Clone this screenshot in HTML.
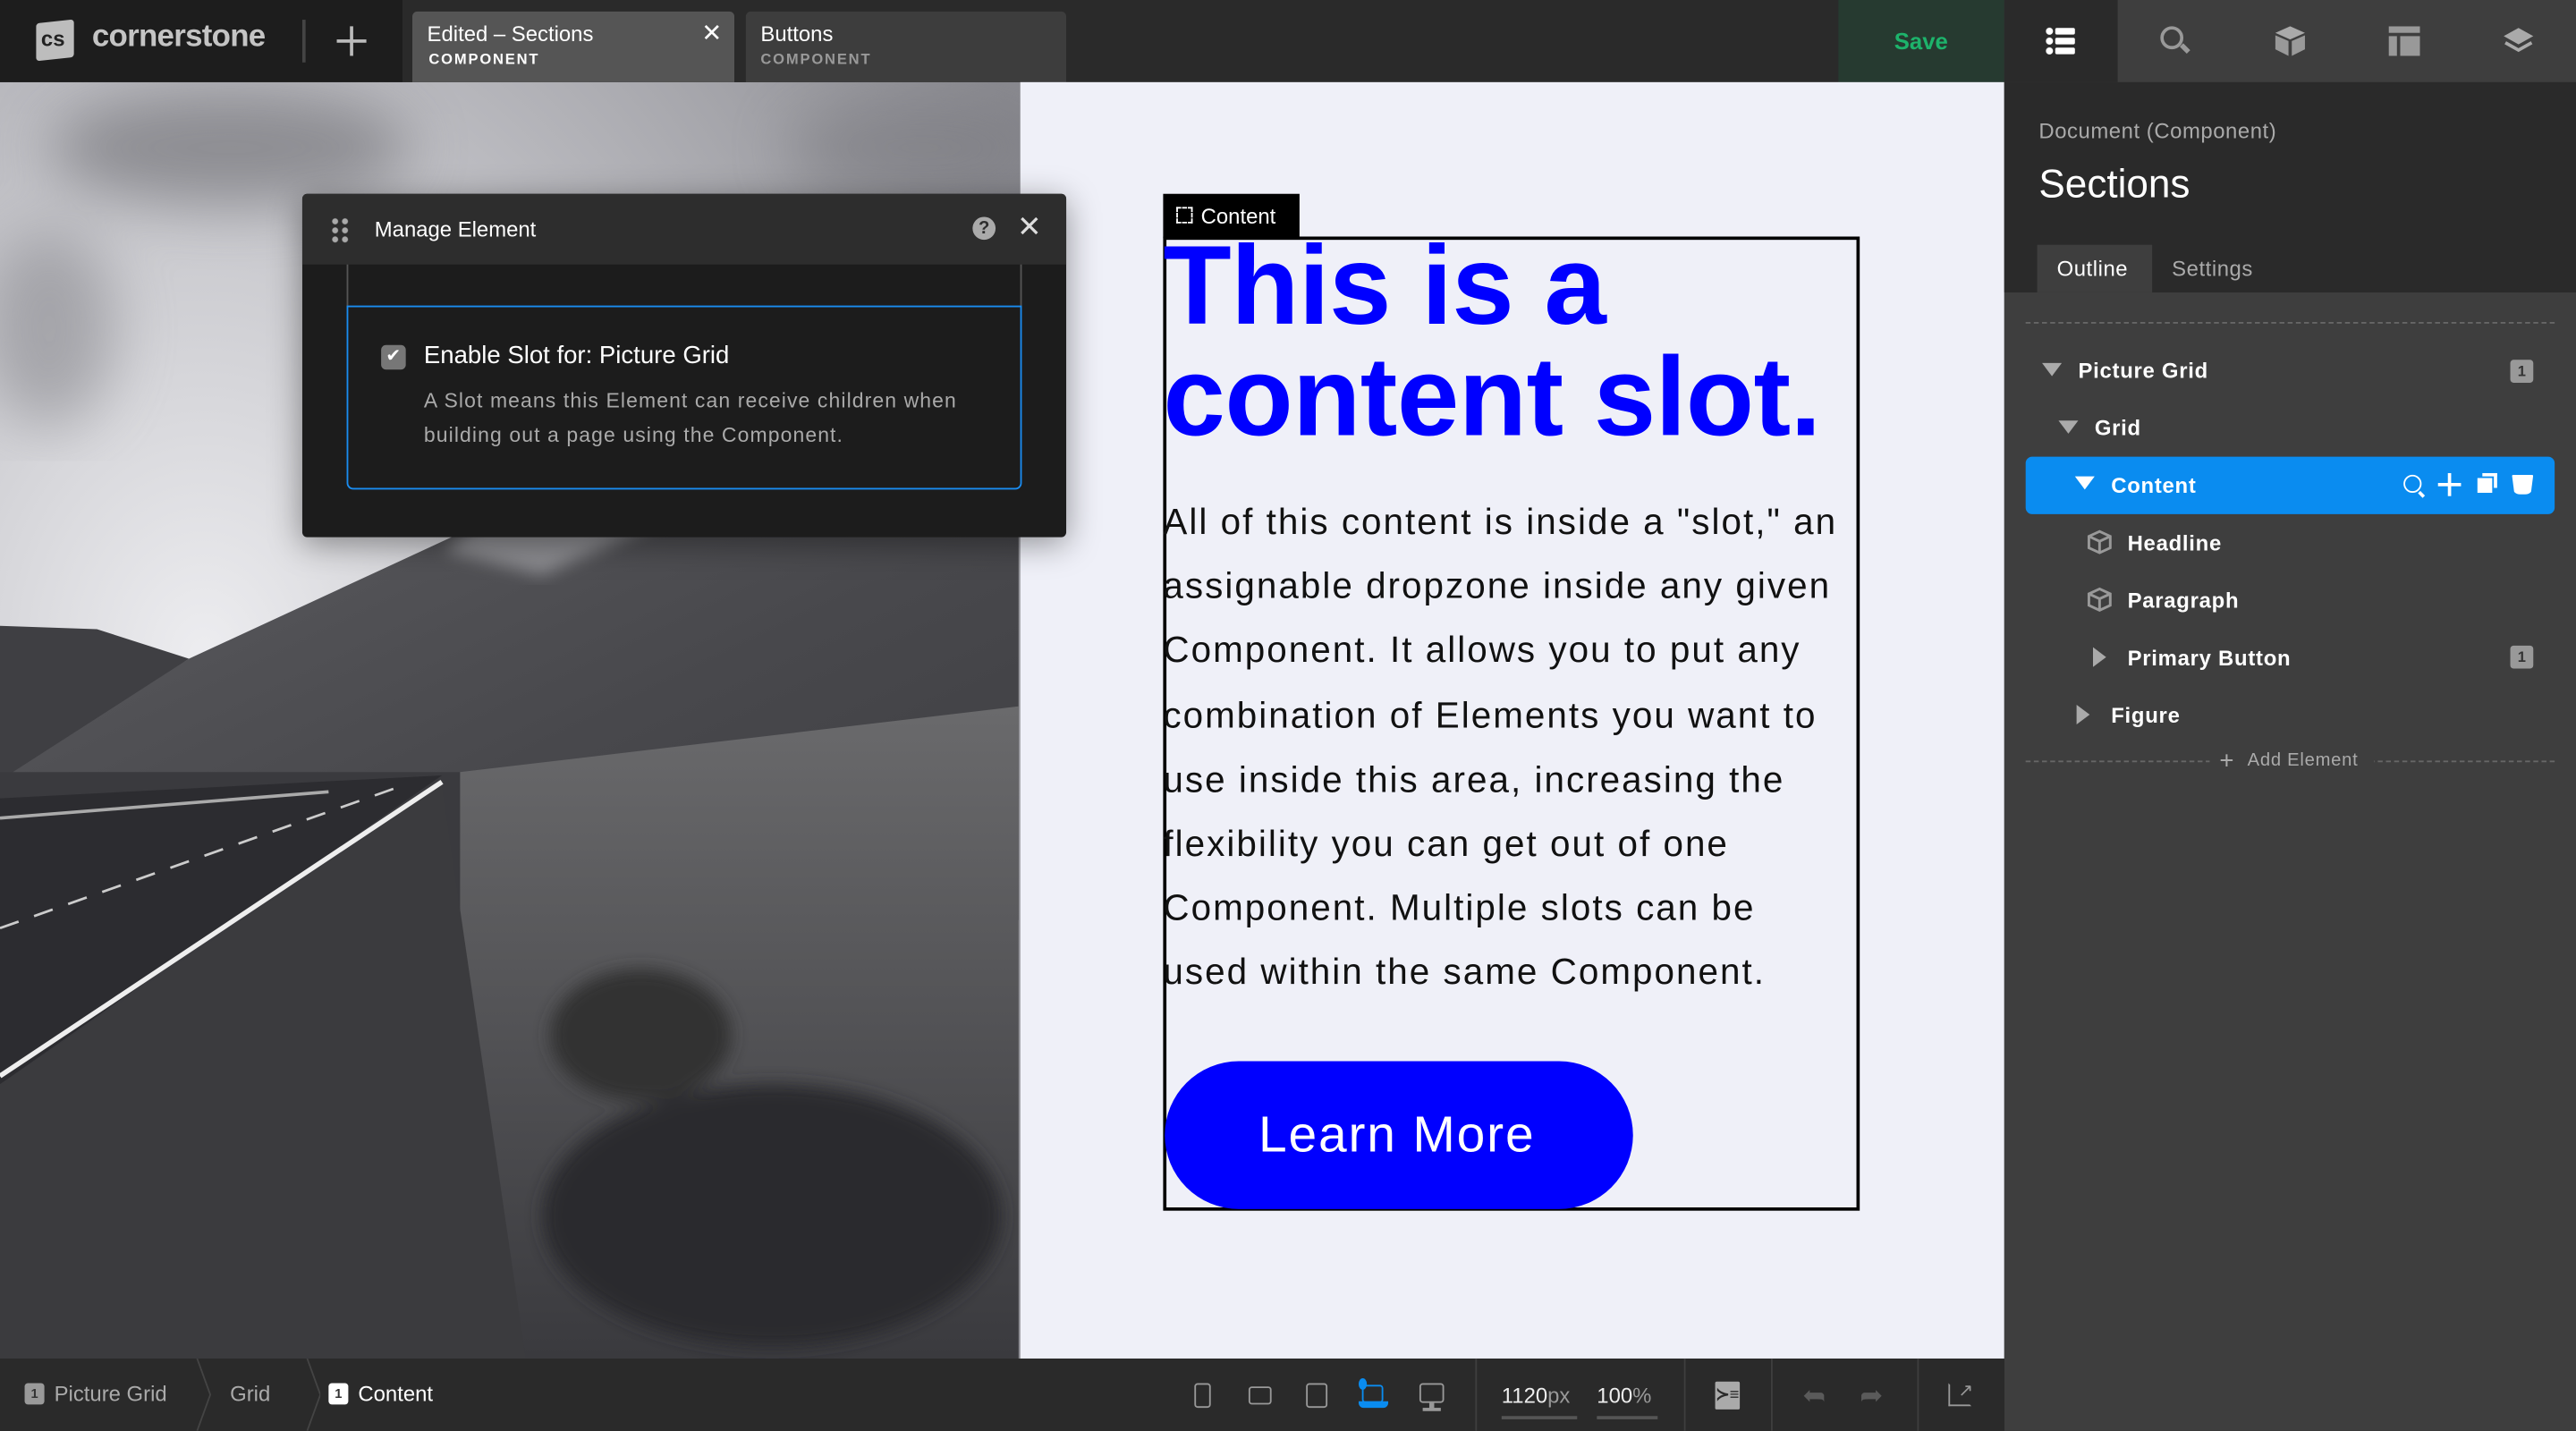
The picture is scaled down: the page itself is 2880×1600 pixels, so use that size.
<!DOCTYPE html>
<html><head><meta charset="utf-8">
<style>
*{box-sizing:border-box;margin:0;padding:0}
html,body{width:2880px;height:1600px;overflow:hidden;background:#2a2a2a}
#w{position:absolute;left:0;top:0;width:1568px;height:871px;transform:scale(1.83674);transform-origin:0 0;font-family:"Liberation Sans",sans-serif;}
.a{position:absolute}
.t{color:#fff;white-space:nowrap}
</style></head><body><div id="w">

<!-- top bar -->
<div class="a" style="left:0;top:0;width:1220px;height:50px;background:#2a2a2a"></div>
<div class="a" style="left:0;top:0;width:245px;height:50px;background:#1d1d1d"></div>
<div class="a" style="left:22px;top:13px;width:23px;height:23px;background:#bdbdbd;border-radius:2px;transform:skewY(-6deg)"></div>
<div class="a" style="left:25px;top:16px;font-size:13px;font-weight:bold;color:#222">cs</div>
<div class="a" style="left:56px;top:12px;font-size:19px;font-weight:bold;color:#c4c4c4;letter-spacing:-0.4px">cornerstone</div>
<div class="a" style="left:184px;top:12px;width:2px;height:26px;background:#444"></div>
<div class="a" style="left:205px;top:24px;width:18px;height:2px;background:#bbb"></div>
<div class="a" style="left:213px;top:16px;width:2px;height:18px;background:#bbb"></div>
<div class="a" style="left:251px;top:7px;width:196px;height:43px;background:#555;border-radius:3px 3px 0 0"></div>
<div class="a t" style="left:260px;top:13px;font-size:13px">Edited – Sections</div>
<div class="a t" style="left:261px;top:31px;font-size:9px;font-weight:bold;letter-spacing:1px">COMPONENT</div>
<div class="a t" style="left:427px;top:11px;font-size:15px">✕</div>
<div class="a" style="left:454px;top:7px;width:195px;height:43px;background:#3d3d3d;border-radius:3px 3px 0 0"></div>
<div class="a t" style="left:463px;top:13px;font-size:13px">Buttons</div>
<div class="a t" style="left:463px;top:31px;font-size:9px;font-weight:bold;letter-spacing:1px;color:#999">COMPONENT</div>
<div class="a" style="left:1119px;top:0;width:101px;height:50px;background:#263a30"></div>
<div class="a" style="left:1153px;top:17px;font-size:14px;font-weight:bold;color:#1db36b">Save</div>

<!-- image -->
<svg class="a" style="left:0;top:50px" width="621" height="777" viewBox="0 50 621 777">
<defs>
<radialGradient id="sky" cx="0.2" cy="0.45" r="0.9"><stop offset="0" stop-color="#ededf0"/><stop offset="0.45" stop-color="#c2c2c7"/><stop offset="1" stop-color="#8a8a90"/></radialGradient>
<linearGradient id="mt" x1="0" y1="0" x2="1" y2="1"><stop offset="0" stop-color="#5e5e62"/><stop offset="0.6" stop-color="#48484c"/><stop offset="1" stop-color="#3e3e42"/></linearGradient>
<linearGradient id="gr" x1="0" y1="0" x2="0" y2="1"><stop offset="0" stop-color="#6a6a6c"/><stop offset="1" stop-color="#3a3a3e"/></linearGradient>
<filter id="bl"><feGaussianBlur stdDeviation="18"/></filter>
<filter id="bl2"><feGaussianBlur stdDeviation="5"/></filter>
</defs>
<rect x="0" y="50" width="621" height="777" fill="url(#sky)"/>
<g filter="url(#bl)" opacity="0.6">
<ellipse cx="140" cy="90" rx="110" ry="35" fill="#6a6a70"/>
<ellipse cx="30" cy="200" rx="40" ry="60" fill="#8a8a90"/>
<ellipse cx="560" cy="90" rx="80" ry="30" fill="#7a7a80"/>
</g>
<polygon points="0,381 59,383 115,401 0,480" fill="#3f3f43"/>
<polygon points="0,475 115,401 277,326 336,274 620,260 620,560 0,560" fill="url(#mt)"/>
<polygon points="270,335 330,290 440,300 330,350" fill="#c8c8cc" opacity="0.5" filter="url(#bl2)"/>
<polygon points="280,470 620,430 620,827 280,827" fill="url(#gr)"/>
<polygon points="0,470 280,470 280,827 0,827" fill="#3a3a3e"/>
<polygon points="0,486 269,472 0,660" fill="#2c2c30"/>
<line x1="0" y1="655" x2="269" y2="476" stroke="#eee" stroke-width="3"/>
<line x1="0" y1="565" x2="240" y2="480" stroke="#ccc" stroke-width="1.5" stroke-dasharray="12 10"/>
<line x1="0" y1="498" x2="200" y2="482" stroke="#aaa" stroke-width="2"/>
<polygon points="0,660 269,478 320,827 0,827" fill="#3b3b3e"/>
<g filter="url(#bl2)">
<ellipse cx="470" cy="740" rx="140" ry="80" fill="#2a2a2d"/>
<ellipse cx="390" cy="630" rx="55" ry="40" fill="#303033"/>
</g>
</svg>

<!-- canvas right -->
<div class="a" style="left:621px;top:50px;width:599px;height:777px;background:#eff0f8"></div>
<div class="a" style="left:708px;top:118px;width:83px;height:27px;background:#000"></div>
<div class="a" style="left:716px;top:126px;width:10px;height:10px;border:1.5px dashed #fff"></div>
<div class="a t" style="left:731px;top:124px;font-size:13px">Content</div>
<div class="a" style="left:708px;top:144px;width:424px;height:593px;border:2px solid #000"></div>
<div class="a" style="left:708px;top:140px;font-size:68px;font-weight:bold;color:#0000ff;line-height:68px;letter-spacing:-0.3px;white-space:nowrap">This is a<br>content slot.</div>
<div class="a" style="left:708px;top:298px;font-size:22px;color:#111;line-height:39.2px;letter-spacing:1.1px;white-space:nowrap">All of this content is inside a "slot," an<br>assignable dropzone inside any given<br>Component. It allows you to put any<br>combination of Elements you want to<br>use inside this area, increasing the<br>flexibility you can get out of one<br>Component. Multiple slots can be<br>used within the same Component.</div>
<div class="a" style="left:709px;top:646px;width:285px;height:90px;background:#0000ff;border-radius:45px"></div>
<div class="a t" style="left:766px;top:673px;font-size:31px;letter-spacing:1px">Learn More</div>

<!-- modal -->
<div class="a" style="left:184px;top:118px;width:465px;height:209px;background:#1c1c1c;border-radius:3px;box-shadow:0 4px 20px rgba(0,0,0,.4)"></div>
<div class="a" style="left:184px;top:118px;width:465px;height:43px;background:#2d2d2d;border-radius:3px 3px 0 0"></div>
<div class="a" style="left:201px;top:132px;width:12px;height:16px;background:radial-gradient(circle,#aaa 1.6px,transparent 2px) 0 0/6px 5.5px"></div>
<div class="a t" style="left:228px;top:132px;font-size:13px">Manage Element</div>
<div class="a" style="left:592px;top:132px;width:14px;height:14px;border-radius:50%;background:#aaa;color:#2d2d2d;font-size:11px;font-weight:bold;text-align:center;line-height:14px">?</div>
<div class="a t" style="left:619px;top:128px;font-size:18px;color:#ddd">✕</div>
<div class="a" style="left:211px;top:161px;width:411px;height:26px;border-left:1px solid #555;border-right:1px solid #555"></div>
<div class="a" style="left:211px;top:186px;width:411px;height:112px;border:1.5px solid #1a8cf0;border-radius:0 0 4px 4px"></div>
<div class="a" style="left:232px;top:210px;width:15px;height:15px;background:#777;border-radius:3px;color:#fff;font-size:11px;text-align:center;line-height:15px">✔</div>
<div class="a t" style="left:258px;top:208px;font-size:15px">Enable Slot for: Picture Grid</div>
<div class="a" style="left:258px;top:234px;font-size:12.5px;color:#aaa;line-height:21px;letter-spacing:0.6px">A Slot means this Element can receive children when<br>building out a page using the Component.</div>

<!-- right panel -->
<div class="a" style="left:1220px;top:0;width:348px;height:871px;background:#3e3e3e"></div>
<div class="a" style="left:1220px;top:0;width:69px;height:50px;background:#2a2a2a"></div>
<div class="a" style="left:1220px;top:50px;width:348px;height:128px;background:#2a2a2a"></div>
<div class="a" style="left:1245px;top:16px;width:18px;height:18px;background:radial-gradient(circle,#fff 2px,transparent 2.3px) 0 0/5px 6px repeat-y"></div>
<div class="a" style="left:1251px;top:17px;width:12px;height:3.5px;background:#fff;border-radius:1px"></div>
<div class="a" style="left:1251px;top:23px;width:12px;height:3.5px;background:#fff;border-radius:1px"></div>
<div class="a" style="left:1251px;top:29px;width:12px;height:3.5px;background:#fff;border-radius:1px"></div>
<div class="a" style="left:1315px;top:16px;width:14px;height:14px;border:2.5px solid #999;border-radius:50%"></div>
<div class="a" style="left:1327px;top:28px;width:6px;height:3px;background:#999;transform:rotate(45deg)"></div>
<svg class="a" style="left:1384px;top:15px" width="20" height="20" viewBox="0 0 20 20"><path d="M10 1 L19 5 L10 9 L1 5Z" fill="#aaa"/><path d="M1 6.5 L9 10 V19 L1 15Z M19 6.5 L11 10 V19 L19 15Z" fill="#999"/></svg>
<svg class="a" style="left:1454px;top:16px" width="19" height="18" viewBox="0 0 19 18"><rect x="0" y="0" width="19" height="4" fill="#999"/><rect x="0" y="6" width="5" height="12" fill="#999"/><rect x="7" y="6" width="12" height="12" fill="#999"/></svg>
<svg class="a" style="left:1523px;top:15px" width="20" height="20" viewBox="0 0 20 20"><path d="M10 2 L19 7 L10 12 L1 7Z" fill="#aaa"/><path d="M2 11 L10 15.5 L18 11" stroke="#aaa" stroke-width="2" fill="none"/></svg>

<div class="a" style="left:1241px;top:72px;font-size:13px;color:#aaa;letter-spacing:0.3px">Document (Component)</div>
<div class="a t" style="left:1241px;top:99px;font-size:24px">Sections</div>
<div class="a" style="left:1240px;top:149px;width:70px;height:29px;background:#3e3e3e"></div>
<div class="a t" style="left:1252px;top:156px;font-size:13px;letter-spacing:0.3px">Outline</div>
<div class="a" style="left:1322px;top:156px;font-size:13px;color:#aaa;letter-spacing:0.3px">Settings</div>
<div class="a" style="left:1233px;top:196px;width:322px;border-top:1px dashed #666"></div>

<div class="a" style="left:1243px;top:221px;border:6px solid transparent;border-top:8px solid #aaa"></div>
<div class="a t" style="left:1265px;top:218px;font-size:13px;font-weight:bold;letter-spacing:0.4px">Picture Grid</div>
<div class="a" style="left:1528px;top:219px;width:14px;height:14px;background:#999;border-radius:2px;font-size:9px;color:#333;text-align:center;line-height:14px;font-weight:bold">1</div>
<div class="a" style="left:1253px;top:256px;border:6px solid transparent;border-top:8px solid #aaa"></div>
<div class="a t" style="left:1275px;top:253px;font-size:13px;font-weight:bold;letter-spacing:0.4px">Grid</div>
<div class="a" style="left:1233px;top:278px;width:322px;height:35px;background:#0a8cf0;border-radius:4px"></div>
<div class="a" style="left:1263px;top:290px;border:6px solid transparent;border-top:8px solid #fff"></div>
<div class="a t" style="left:1285px;top:288px;font-size:13px;font-weight:bold;letter-spacing:0.4px">Content</div>
<div class="a" style="left:1463px;top:289px;width:11px;height:11px;border:1.8px solid #fff;border-radius:50%"></div>
<div class="a" style="left:1472px;top:300px;width:4px;height:1.8px;background:#fff;transform:rotate(45deg)"></div>
<div class="a" style="left:1484px;top:294px;width:14px;height:2px;background:#fff"></div>
<div class="a" style="left:1490px;top:288px;width:2px;height:14px;background:#fff"></div>
<div class="a" style="left:1508px;top:291px;width:9px;height:9px;background:#fff"></div>
<div class="a" style="left:1511px;top:288px;width:9px;height:9px;border-top:2px solid #fff;border-right:2px solid #fff"></div>
<div class="a" style="left:1529px;top:289px;width:13px;height:12px;background:#fff;border-radius:1px 1px 5px 5px;clip-path:polygon(0 0,100% 0,88% 100%,12% 100%)"></div>
<svg class="a" style="left:1270px;top:322px" width="16" height="16" viewBox="0 0 16 16"><path d="M8 1.5 L14.5 4.5 V11.5 L8 14.5 L1.5 11.5 V4.5Z M1.5 4.5 L8 7.5 L14.5 4.5 M8 7.5 V14.5" stroke="#999" stroke-width="1.6" fill="none"/></svg>
<div class="a t" style="left:1295px;top:323px;font-size:13px;font-weight:bold;letter-spacing:0.4px">Headline</div>
<svg class="a" style="left:1270px;top:357px" width="16" height="16" viewBox="0 0 16 16"><path d="M8 1.5 L14.5 4.5 V11.5 L8 14.5 L1.5 11.5 V4.5Z M1.5 4.5 L8 7.5 L14.5 4.5 M8 7.5 V14.5" stroke="#999" stroke-width="1.6" fill="none"/></svg>
<div class="a t" style="left:1295px;top:358px;font-size:13px;font-weight:bold;letter-spacing:0.4px">Paragraph</div>
<div class="a" style="left:1274px;top:394px;border:6px solid transparent;border-left:8px solid #aaa"></div>
<div class="a t" style="left:1295px;top:393px;font-size:13px;font-weight:bold;letter-spacing:0.4px">Primary Button</div>
<div class="a" style="left:1528px;top:393px;width:14px;height:14px;background:#999;border-radius:2px;font-size:9px;color:#333;text-align:center;line-height:14px;font-weight:bold">1</div>
<div class="a" style="left:1264px;top:429px;border:6px solid transparent;border-left:8px solid #aaa"></div>
<div class="a t" style="left:1285px;top:428px;font-size:13px;font-weight:bold;letter-spacing:0.4px">Figure</div>
<div class="a" style="left:1233px;top:463px;width:322px;border-top:1px dashed #666"></div>
<div class="a" style="left:1345px;top:455px;width:100px;height:16px;background:#3e3e3e"></div>
<div class="a" style="left:1351px;top:455px;font-size:15px;color:#aaa">+</div>
<div class="a" style="left:1368px;top:457px;font-size:11px;color:#aaa;letter-spacing:0.4px">Add Element</div>

<!-- bottom bar -->
<div class="a" style="left:0;top:827px;width:1220px;height:44px;background:#2a2a2a"></div>
<div class="a" style="left:15px;top:842px;width:12px;height:13px;background:#999;border-radius:2px;font-size:8px;font-weight:bold;color:#333;text-align:center;line-height:13px">1</div>
<div class="a" style="left:33px;top:841px;font-size:13px;color:#aaa">Picture Grid</div>
<svg class="a" style="left:115px;top:827px" width="80" height="44"><path d="M5 0 L13 22 L5 44 M72 0 L80 22 L72 44" stroke="#444" stroke-width="1" fill="none"/></svg>
<div class="a" style="left:140px;top:841px;font-size:13px;color:#aaa">Grid</div>
<div class="a" style="left:200px;top:842px;width:12px;height:13px;background:#fff;border-radius:2px;font-size:8px;font-weight:bold;color:#333;text-align:center;line-height:13px">1</div>
<div class="a t" style="left:218px;top:841px;font-size:13px">Content</div>
<div class="a" style="left:727px;top:842px;width:10px;height:15px;border:1.5px solid #999;border-radius:2px"></div>
<div class="a" style="left:760px;top:844px;width:14px;height:11px;border:1.5px solid #999;border-radius:2px"></div>
<div class="a" style="left:795px;top:842px;width:13px;height:15px;border:1.5px solid #999;border-radius:2px"></div>
<div class="a" style="left:829px;top:843px;width:13px;height:11px;border:1.5px solid #0a8cf0;border-radius:2px"></div>
<div class="a" style="left:827px;top:853px;width:18px;height:4px;background:#0a8cf0;border-radius:0 0 3px 3px"></div>
<div class="a" style="left:827px;top:839px;width:5px;height:7px;background:#0a8cf0;border-radius:50%"></div>
<div class="a" style="left:864px;top:842px;width:15px;height:12px;border:1.5px solid #999;border-radius:2px"></div>
<div class="a" style="left:870px;top:854px;width:3px;height:4px;background:#999"></div>
<div class="a" style="left:866px;top:857px;width:11px;height:1.5px;background:#999"></div>
<div class="a" style="left:898px;top:827px;width:1px;height:44px;background:#3e3e3e"></div>
<div class="a t" style="left:914px;top:842px;font-size:13px;color:#eee">1120<span style="color:#999">px</span></div>
<div class="a" style="left:914px;top:862px;width:46px;height:2px;background:#555"></div>
<div class="a t" style="left:972px;top:842px;font-size:13px;color:#eee">100<span style="color:#999">%</span></div>
<div class="a" style="left:972px;top:862px;width:37px;height:2px;background:#555"></div>
<div class="a" style="left:1025px;top:827px;width:1px;height:44px;background:#3e3e3e"></div>
<div class="a" style="left:1044px;top:841px;width:15px;height:17px;background:#aaa;border-radius:1px;font-size:10px;color:#2a2a2a;text-align:center;line-height:17px;font-weight:bold">≻≡</div>
<div class="a" style="left:1078px;top:827px;width:1px;height:44px;background:#3e3e3e"></div>
<div class="a" style="left:1097px;top:840px;font-size:17px;color:#5a5a5a;transform:scaleX(-1)">➦</div>
<div class="a" style="left:1132px;top:840px;font-size:17px;color:#5a5a5a">➦</div>
<div class="a" style="left:1167px;top:827px;width:1px;height:44px;background:#3e3e3e"></div>
<div class="a" style="left:1186px;top:842px;width:14px;height:14px;border:1.5px solid #999;border-top-color:transparent;border-right-color:transparent"></div>
<div class="a" style="left:1192px;top:840px;font-size:11px;color:#999">↗</div>
</div></body></html>
